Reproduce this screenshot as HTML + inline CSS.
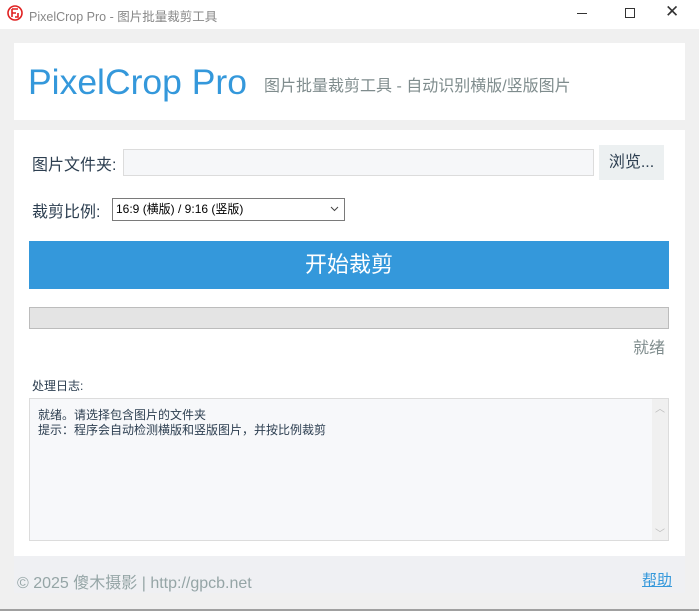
<!DOCTYPE html>
<html><head><meta charset="utf-8"><style>
*{margin:0;padding:0;box-sizing:border-box}
body{width:699px;height:611px;background:#f0f0f0;position:relative;overflow:hidden;font-family:"Liberation Sans","Noto Sans CJK SC",sans-serif}
.a{position:absolute}
</style></head><body>
<div class="a" style="left:0;top:0;width:699px;height:29px;background:#fff"></div>
<svg class="a" style="left:7px;top:5px" width="16" height="16" viewBox="0 0 16 16"><circle cx="8" cy="8" r="7" fill="none" stroke="#e02020" stroke-width="1.6"/><path d="M5 4v8M5 4h6M5 8h4M11 8v4H8" fill="none" stroke="#e02020" stroke-width="1.6"/></svg>
<div class="a" style="left:29px;top:6px;font-size:12.5px;color:#888">PixelCrop Pro - 图片批量裁剪工具</div>
<div class="a" style="left:577px;top:13px;width:10px;height:1px;background:#333"></div>
<div class="a" style="left:625px;top:8px;width:10px;height:10px;border:1px solid #333"></div>
<div class="a" style="left:665px;top:2px;font-size:17px;color:#333">✕</div>

<div class="a" style="left:14px;top:43px;width:671px;height:77px;background:#fff"></div>
<div class="a" style="left:28px;top:62px;font-size:35.5px;color:#3498db">PixelCrop Pro</div>
<div class="a" style="left:264px;top:72px;font-size:16px;color:#7f8c8d">图片批量裁剪工具 - 自动识别横版/竖版图片</div>

<div class="a" style="left:14px;top:130px;width:671px;height:426px;background:#fff"></div>
<div class="a" style="left:32px;top:151px;font-size:16px;color:#2c3e50">图片文件夹:</div>
<div class="a" style="left:123px;top:149px;width:471px;height:27px;background:#f6f7f9;border:1px solid #dcdcdc"></div>
<div class="a" style="left:599px;top:145px;width:65px;height:35px;background:#ecf0f1;font-size:16px;color:#2c3e50;text-align:center;line-height:35px">浏览...</div>
<div class="a" style="left:32px;top:198px;font-size:16px;color:#2c3e50">裁剪比例:</div>
<div class="a" style="left:112px;top:198px;width:233px;height:23px;border:1px solid #7a7a7a;background:#fff;font-size:12px;line-height:21px;padding-left:3px;color:#000">16:9 (横版) / 9:16 (竖版)</div>
<svg class="a" style="left:330px;top:206px" width="9" height="6"><path d="M1 1l3.5 3.5L8 1" fill="none" stroke="#444"/></svg>
<div class="a" style="left:29px;top:241px;width:640px;height:48px;background:#3498db;color:#fff;font-size:22px;text-align:center;line-height:48px">开始裁剪</div>
<div class="a" style="left:29px;top:307px;width:640px;height:22px;background:#e4e4e4;border:1px solid #bcbcbc"></div>
<div class="a" style="left:633px;top:334px;font-size:16px;color:#7f8c8d">就绪</div>
<div class="a" style="left:32px;top:377px;font-size:12px;color:#2c3e50">处理日志:</div>
<div class="a" style="left:29px;top:398px;width:640px;height:143px;background:#f7f8fa;border:1px solid #dcdcdc"></div>
<div class="a" style="left:652px;top:399px;width:16px;height:141px;background:#f0f0f0"></div>
<div class="a" style="left:655px;top:400px;font-size:10px;color:#bbb">︿</div>
<div class="a" style="left:655px;top:525px;font-size:10px;color:#bbb">﹀</div>
<div class="a" style="left:38px;top:408px;font-size:12px;line-height:15px;color:#2c3e50">就绪。请选择包含图片的文件夹<br>提示：程序会自动检测横版和竖版图片，并按比例裁剪</div>

<div class="a" style="left:14px;top:556px;width:671px;height:37px;background:#eff0f3"></div>
<div class="a" style="left:17px;top:569px;font-size:16px;color:#95a5a6">© 2025 傻木摄影 | http://gpcb.net</div>
<div class="a" style="left:642px;top:569px;font-size:15px;color:#3498db;text-decoration:underline">帮助</div>
<div class="a" style="left:0;top:609px;width:699px;height:2px;background:#a0a0a0"></div>
</body></html>
